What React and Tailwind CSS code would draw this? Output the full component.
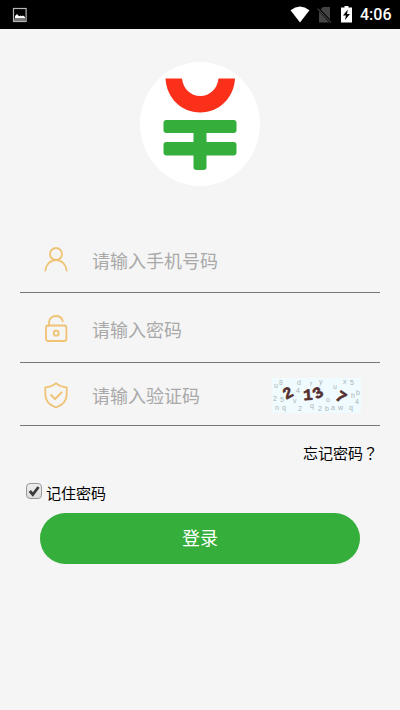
// src/pages/Login.jsx
import React, { useState } from "react";

const StatusBar = () => (
  <div className="h-[29px] bg-black flex items-center px-3 text-white">
    {/* Screenshot notification */}
    <svg width="16" height="16" viewBox="0 0 16 16" aria-hidden="true">
      <rect x="1.5" y="1.5" width="12.6" height="13" fill="#000" stroke="#b5b5b5" strokeWidth="1.2" />
      <path d="M3 9l1-1 1-1 1 1.2 1.4 1 1.3-.8 1 .8 1.3-.6L13 10v1.500H3z" fill="#fff" />
      <path d="M2 11.500h11.600V14H2z" fill="#777" />
    </svg>
    <div className="ml-auto -mr-1 flex items-center">
      {/* Wifi */}
      <svg width="20" height="18" viewBox="0 0 20 18" aria-hidden="true">
        <path d="M.5 4.200Q10-3 19.500 4.200L10 16.500z" fill="#fff" />
      </svg>
      {/* No SIM */}
      <svg className="ml-[7px]" width="15" height="18" viewBox="0 0 15 18" aria-hidden="true">
        <path d="M6 1h7v15.500H2V5z" fill="#444" />
        <path d="M.5 2l13.500 14.500" stroke="#000" strokeWidth="2.600" />
        <path d="M.5 2.600l13.500 14" stroke="#666" strokeWidth="1" />
      </svg>
      {/* Battery */}
      <svg className="ml-[9px]" width="11" height="18" viewBox="0 0 11 18" aria-hidden="true">
        <path d="M3.500 0h4v1.500H11V16.500H0V1.500h3.500z" fill="#fff" />
        <path d="M6.800 3.500L2 9.500h2.900L4 14 9 8H6z" fill="#000" />
      </svg>
      <span className="ml-2 w-8 text-base leading-5 font-medium whitespace-nowrap font-[Roboto,sans-serif]">
        4:06
      </span>
    </div>
  </div>
);

const Logo = () => (
  <svg width="120" height="124" viewBox="0 0 120 124" role="img" aria-label="Logo">
    <ellipse cx="60" cy="62" rx="60" ry="62" fill="#fff" />
    <path d="M25.500 16.500H42C43 26.500 50.500 34 60.250 34S77.500 26.500 78.500 16.500H95C94 36 79 50.500 60.250 50.500S26.500 36 25.500 16.500z" fill="#fa301b" />
    <rect x="23.500" y="58" width="73" height="13" rx="3" fill="#35ae3b" />
    <rect x="23.500" y="80" width="73" height="13.500" rx="3" fill="#35ae3b" />
    <path d="M53.500 69h13v36q0 3-3 3h-7q-3 0-3-3z" fill="#35ae3b" />
  </svg>
);

const UserIcon = () => (
  <svg width="24" height="28" viewBox="0 0 24 28" fill="none" stroke="#f0c274" strokeWidth="1.800" strokeLinecap="round">
    <circle cx="12" cy="7" r="6" />
    <path d="M1.300 23.600C2 17.500 6 13.200 12 13.200S22 17.500 22.700 23.600" />
  </svg>
);

const LockIcon = () => (
  <svg width="24" height="28" viewBox="0 0 24 28" fill="none" stroke="#f0c274" strokeWidth="1.800" strokeLinecap="round">
    <rect x="2" y="10.500" width="20.400" height="15.500" rx="2" />
    <path d="M5 10.500V7.500C5 3.500 8 1 12 1c3.300 0 6 2 6.800 5.200" />
    <circle cx="12.200" cy="18.200" r="2.500" />
  </svg>
);

const ShieldIcon = () => (
  <svg width="24" height="28" viewBox="0 0 24 28" fill="none" stroke="#f0c274" strokeWidth="1.800" strokeLinecap="round" strokeLinejoin="round">
    <path d="M12 1.200C9.500 3.500 5.500 5 1.300 5.300V12.500c0 6 4 10.500 10.700 13 6.700-2.500 10.700-7 10.700-13V5.300C18.500 5 14.500 3.500 12 1.200z" />
    <path d="M7 13l4 4 6.500-6.500" />
  </svg>
);

// Faint letters behind the code: [char, x, y]
const noise = [
  ["u", 2, 10], ["8", 7, 7], ["d", 25, 7], ["r", 38, 8], ["y", 47, 6],
  ["u", 61, 11], ["x", 71, 6], ["5", 78, 7], ["2", 1, 23], ["5", 8, 24],
  ["v", 21, 25], ["4", 24, 15], ["q", 38, 30], ["n", 3, 32],
  ["q", 10, 32], ["2", 26, 33], ["2", 46, 33], ["b", 53, 33], ["o", 54, 24],
  ["a", 59, 32], ["w", 66, 32], ["q", 77, 32], ["h", 79, 20],
  ["b", 84, 17], ["4", 83, 26],
];

const digits = [
  ["2", 16, 15, -28],
  ["1", 36, 17, -4],
  ["3", 46, 15, -32],
  ["7", 69, 19, 34],
];

const Captcha = () => (
  <svg width="89" height="35" viewBox="0 0 89 35" role="img" aria-label="验证码">
    <rect width="89" height="35" fill="#f0fbff" />
    <g fontFamily="Liberation Sans, sans-serif" fontSize="7" fill="#a9b3b6">
      {noise.map(([char, x, y], i) => (
        <text key={i} x={x} y={y}>{char}</text>
      ))}
    </g>
    <g fontFamily="Liberation Mono, monospace" fontSize="16" fontWeight="bold" fill="#54302f" stroke="#54302f" strokeWidth="0.6" textAnchor="middle">
      {digits.map(([char, x, y, angle]) => (
        <text key={char} x={x} y={y + 5} transform={`rotate(${angle} ${x} ${y})`}>{char}</text>
      ))}
    </g>
  </svg>
);

const Field = ({ icon, label, className, children, ...props }) => (
  <div className={`flex items-center border-b border-[#777777] pl-6 pr-[19px] pt-[3px] ${className}`}>
    {icon}
    <input
      aria-label={label}
      placeholder={label}
      className="ml-6 min-w-0 flex-1 bg-transparent pb-px text-lg leading-6 text-black outline-none placeholder:text-[#a9a9a9]"
      {...props}
    />
    {children}
  </div>
);

const App = () => {
  const [remember, setRemember] = useState(true);

  return (
    <div className="min-h-screen bg-[#f5f5f5] text-black font-['Noto_Sans_CJK_SC',sans-serif]">
      <StatusBar />
      <form className="px-5 pt-[33px] pb-8" onSubmit={(e) => e.preventDefault()}>
        <div className="flex justify-center">
          <Logo />
        </div>

        <div className="mt-10">
          <Field className="h-[67px]" icon={<UserIcon />} label="请输入手机号码" type="tel" />
          <Field className="h-[70px]" icon={<LockIcon />} label="请输入密码" type="password" />
          <Field className="h-[63px]" icon={<ShieldIcon />} label="请输入验证码" type="text">
            <Captcha />
          </Field>
        </div>

        <div className="mt-[15px] flex justify-end pr-0.5">
          <a href="#forgot" className="text-[15px] leading-6">
            忘记密码<span className="font-['Noto_Sans_CJK_TC',sans-serif]">？</span>
          </a>
        </div>

        <div className="mt-3 flex items-center pl-[6px]">
          <span className="relative flex">
            <input
              id="remember"
              type="checkbox"
              checked={remember}
              onChange={(e) => setRemember(e.target.checked)}
              className="peer size-4 appearance-none rounded-sm border border-[#999999] bg-linear-to-b from-[#eeeeee] to-[#dddddd]"
            />
            <svg
              className="pointer-events-none absolute inset-0 hidden peer-checked:block"
              width="16"
              height="16"
              viewBox="0 0 16 16"
            >
              <path d="M3.800 8l3 3.500L12.500 4" fill="none" stroke="#3c3c3c" strokeWidth="2.800" />
            </svg>
          </span>
          <label htmlFor="remember" className="pl-1 pt-1 text-[15px] leading-6">
            记住密码
          </label>
        </div>

        <div className="mt-2 px-5">
          <button
            type="submit"
            className="h-[51px] w-full rounded-full bg-[#35ae3b] pb-1 text-lg leading-6 text-white"
          >
            登录
          </button>
        </div>
      </form>
    </div>
  );
};

export default App;
